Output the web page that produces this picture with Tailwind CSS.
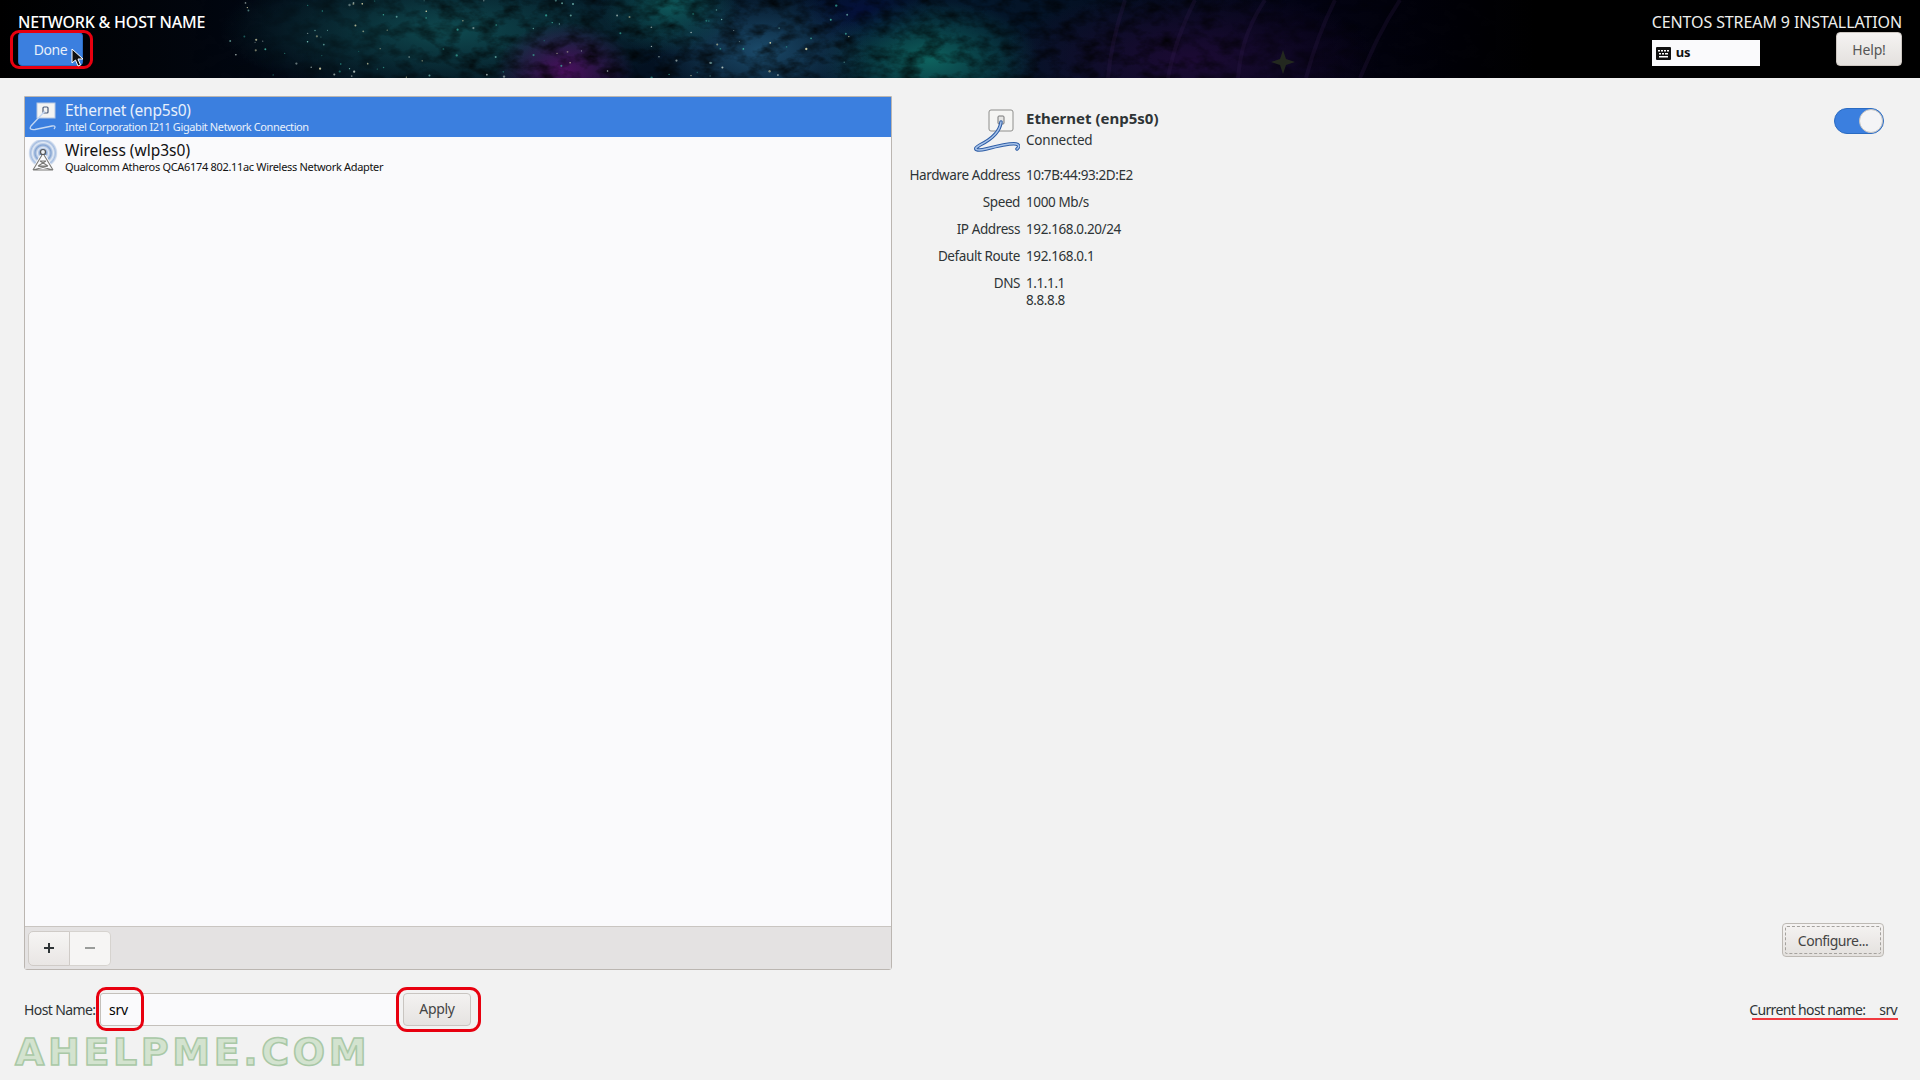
<!DOCTYPE html>
<html lang="en">
<head>
  <meta charset="UTF-8">
  <title>Network &amp; Host Name</title>
  <script src="https://cdn.jsdelivr.net/npm/@tailwindcss/browser@4"></script>
</head>
<body class="relative h-[1080px] w-[1920px] overflow-hidden bg-[#f2f2f2] font-['Noto_Sans',sans-serif] text-[14px] text-[#2e3436]">

  <!-- Banner -->
  <header class="relative flex h-[78px] justify-between overflow-hidden bg-[#020210] bg-[radial-gradient(ellipse_70px_50px_at_565px_72px,#4a0f5e_0%,transparent_100%),radial-gradient(ellipse_70px_50px_at_670px_5px,#0f5a5c_0%,transparent_100%),radial-gradient(ellipse_110px_60px_at_760px_50px,#1b4a6a_0%,transparent_100%),radial-gradient(ellipse_110px_60px_at_930px_60px,#0e625e_0%,transparent_100%),radial-gradient(ellipse_70px_40px_at_860px_10px,#04103a_0%,transparent_100%),radial-gradient(ellipse_190px_70px_at_1190px_60px,#1c0a34_0%,transparent_100%),radial-gradient(ellipse_230px_70px_at_450px_30px,#0f4a50_0%,transparent_100%),linear-gradient(90deg,#000_0%,#020814_15%,#04182c_50%,#030314_68%,#000_80%)]">
    <svg class="absolute inset-0" width="1920" height="78">
      <filter id="noise"><feTurbulence type="fractalNoise" baseFrequency="0.05 0.08" numOctaves="4" seed="7"/><feColorMatrix values="0 0 0 0 0  0 0 0 0 0  0 0 0 0 0  1.6 0 0 0 -0.65"/></filter>
      <linearGradient id="fade"><stop offset="0.1" stop-color="#000"/><stop offset="0.25" stop-color="#fff"/><stop offset="0.6" stop-color="#fff"/><stop offset="0.78" stop-color="#000"/></linearGradient>
      <mask id="fadeMask"><rect width="1920" height="78" fill="url(#fade)"/></mask>
      <rect width="1920" height="78" filter="url(#noise)" mask="url(#fadeMask)"/>
      <g id="stars"></g>
      <path d="M1125 0C1115 30 1110 55 1108 78M1195 0C1180 30 1172 55 1168 78M1265 0C1245 30 1240 55 1238 78M1335 0C1320 30 1312 55 1306 78M1400 0C1380 30 1370 55 1360 78" fill="none" stroke="#3a2458" stroke-width="4" opacity="0.2"/>
      <path d="M1283 50l3 9 9 3-9 3-3 9-3-9-9-3 9-3z" fill="#23281f"/>
    </svg>
    <div class="relative pl-[18px]">
      <h1 class="mt-[11px] text-[16px] leading-[22px] font-medium tracking-[-0.2px] text-white">NETWORK &amp; HOST NAME</h1>
      <button class="mt-[-1px] h-[34px] w-[65px] rounded-[4px] border border-[#2a6bc2] bg-[#3b7fdf] text-[14px] tracking-[-0.4px] text-[#e8effa]">Done</button>
    </div>
    <div class="relative flex flex-col items-end pr-[18px]">
      <p class="mt-[11px] text-[16px] leading-[22px] tracking-[-0.1px] text-[#eeeeec]">CENTOS STREAM 9 INSTALLATION</p>
      <div class="flex w-full justify-between">
        <div class="mt-[7px] flex h-[26px] w-[108px] items-center gap-[5px] bg-[#fafafc] pl-[4px] text-[13px] font-bold text-[#111]">
          <svg width="15" height="13" viewBox="0 0 15 13"><rect width="15" height="13" rx="1" fill="#111"/><path d="M2 3h2v1.500H2zM5 3h2v1.500H5zM8 3h2v1.500H8zM11 3h2v1.500h-2zM3 6h2v1.500H3zM6 6h2v1.500H6zM9 6h3v1.500H9zM3 9h9v1.500H3z" fill="#fff"/></svg>
          us
        </div>
        <button class="mt-[-1px] h-[34px] w-[66px] rounded-[4px] border border-[#cdc7c2] bg-gradient-to-b from-[#f5f3f2] to-[#e4e1de] text-[14px] tracking-[-0.2px] text-[#555]">Help!</button>
      </div>
    </div>
  </header>

  <main class="flex h-[1002px] flex-col px-[24px]">
    <div class="flex h-[892px] pt-[18px]">

      <!-- Device list -->
      <section class="flex h-[874px] w-[868px] flex-col rounded-b-[3px] border border-[#bbb6b1]">
        <ul class="h-[829px] bg-[#fafafc]">
          <li class="flex h-[40px] items-center bg-[#3b7fdf] text-[#e8f0fb]">
            <svg class="mx-[3px] shrink-0" width="34" height="34" viewBox="0 0 34 34">
              <rect x="9" y="3" width="18" height="15" fill="#f4f4f2" stroke="#b9c9e2"/>
              <rect x="15" y="7" width="5" height="6" rx="1" fill="none" stroke="#4a5a78" stroke-width="1.200"/>
              <path d="M17 11L3 26c-2 3 0 4 4 3.500L24 26c3-.5 4 .5 2 3" fill="none" stroke="#c5d8f2" stroke-width="1.300"/>
            </svg>
            <div>
              <p class="text-[15.5px] leading-[18px] tracking-[-0.2px]">Ethernet (enp5s0)</p>
              <p class="text-[11px] leading-[15px] tracking-[-0.4px]">Intel Corporation I211 Gigabit Network Connection</p>
            </div>
          </li>
          <li class="flex h-[40px] items-center text-[#111]">
            <svg class="mx-[3px] shrink-0" width="34" height="34" viewBox="0 0 34 34">
              <defs>
                <radialGradient id="waves" cx="0.5" cy="0.5" r="0.5">
                  <stop offset="0.2" stop-color="#6f93c8"/><stop offset="0.38" stop-color="#dfe7f3"/><stop offset="0.55" stop-color="#84a4d2"/><stop offset="0.72" stop-color="#e4ebf5"/><stop offset="0.85" stop-color="#a5bde0"/><stop offset="1" stop-color="#e9eef6"/>
                </radialGradient>
              </defs>
              <circle cx="15" cy="13" r="14.500" fill="url(#waves)"/>
              <path d="M12 15L4 30h22l-8-15z" fill="#fafafc"/>
              <circle cx="15" cy="12" r="2.500" fill="#eef1f5" stroke="#555" stroke-width="1.200"/>
              <path d="M14 15L5 30M16 15l9 15M12 21h6M10 26h10M5 30h20M12 21l8 5M18 21l-8 5M10 26l15 4M20 26L5 30" fill="none" stroke="#7b7b78" stroke-width="1.100"/>
            </svg>
            <div>
              <p class="text-[15.5px] leading-[18px]">Wireless (wlp3s0)</p>
              <p class="text-[11px] leading-[15px] tracking-[-0.32px]">Qualcomm Atheros QCA6174 802.11ac Wireless Network Adapter</p>
            </div>
          </li>
        </ul>
        <div class="flex h-[43px] items-center border-t border-[#c9c5c1] bg-[#e4e2e2] pl-[3px]">
          <button class="flex h-[35px] w-[42px] items-center justify-center rounded-l-[5px] border border-[#cfcbc7] bg-gradient-to-b from-[#f6f5f4] to-[#e9e6e4]">
            <svg width="12" height="12" viewBox="0 0 12 12"><path d="M6 1v10M1 6h10" stroke="#2e3436" stroke-width="2"/></svg>
          </button>
          <button class="flex h-[35px] w-[41px] items-center justify-center rounded-r-[5px] border border-l-0 border-[#d6d3cf] bg-[#f6f5f4]">
            <svg width="12" height="12" viewBox="0 0 12 12"><path d="M1 6h10" stroke="#9a9c9a" stroke-width="2"/></svg>
          </button>
        </div>
      </section>

      <!-- Device details -->
      <section class="relative flex-1">
        <div class="flex items-start pl-[80px] pt-[12px]">
          <svg class="mt-[1px] shrink-0" width="48" height="46" viewBox="0 0 48 46">
            <rect x="17" y="1" width="24" height="21" rx="2" fill="#f5f5f3" stroke="#8e8e8c"/>
            <rect x="26" y="7" width="6" height="8" rx="1" fill="#e6e6e4" stroke="#777"/>
            <path d="M29 13C28 22 20 30 8 36C-1 41 6 42 14 40C26 37 38 34 44 35C48 36 47 38 45 40" fill="none" stroke="#2f5ea6" stroke-width="3.500" stroke-linecap="round"/>
            <path d="M29 13C28 22 20 30 8 36C-1 41 6 42 14 40C26 37 38 34 44 35C48 36 47 38 45 40" fill="none" stroke="#a9c4ea" stroke-width="1.500" stroke-linecap="round"/>
          </svg>
          <div class="pl-[6px]">
            <p class="text-[15px] leading-[20px] font-bold">Ethernet (enp5s0)</p>
            <p class="mt-[2px] text-[13.5px] leading-[20px] tracking-[-0.2px]">Connected</p>
          </div>
        </div>
        <dl class="mt-[10px] grid w-[450px] grid-cols-[128px_1fr] gap-x-[6px] gap-y-[7px] text-[13.5px] leading-[20px] tracking-[-0.4px]">
          <dt class="text-right">Hardware Address</dt><dd>10:7B:44:93:2D:E2</dd>
          <dt class="text-right">Speed</dt><dd>1000 Mb/s</dd>
          <dt class="text-right">IP Address</dt><dd>192.168.0.20/24</dd>
          <dt class="text-right">Default Route</dt><dd>192.168.0.1</dd>
          <dt class="text-right">DNS</dt><dd class="pt-[2px] leading-[17px]">1.1.1.1<br>8.8.8.8</dd>
        </dl>
        <div class="absolute left-[942px] top-[12px] h-[26px] w-[50px] rounded-full border border-[#2a6bc2] bg-[#3b7fdf]">
          <div class="ml-auto h-[24px] w-[24px] rounded-full border border-[#c5c2be] bg-[#f4f4f6]"></div>
        </div>
        <button class="absolute left-[890px] top-[827px] h-[34px] w-[102px] rounded-[4px] border border-[#bdb9b4] bg-gradient-to-b from-[#f5f3f2] to-[#e4e1de] p-[2px] text-[14px] tracking-[-0.5px] text-[#444]">
          <span class="flex h-full items-center justify-center rounded-[2px] border border-dashed border-[#a5a29e]">Configure...</span>
        </button>
      </section>
    </div>

    <!-- Host name row -->
    <div class="flex items-center justify-between pt-[23px]">
      <div class="flex items-center">
        <label class="w-[76px] whitespace-nowrap pb-[1px] text-[14px] tracking-[-0.6px]">Host Name:</label>
        <div class="flex h-[33px] w-[298px] items-center rounded-l-[3px] border border-[#c4c0bb] bg-[#fafafc] pb-[1px] pl-[8px] text-[14px] tracking-[-0.3px] text-black">srv</div>
        <button class="ml-[5px] h-[33px] w-[68px] rounded-[4px] border border-[#c9c5c1] bg-gradient-to-b from-[#f3f2f1] to-[#e6e3e1] pb-[2px] text-[14px] tracking-[-0.3px] text-[#444]">Apply</button>
      </div>
      <p class="mr-[-1px] flex gap-[14px] text-[14px] tracking-[-0.65px]"><span>Current host name:</span><span>srv</span></p>
    </div>

    <p class="mt-[9px] ml-[-9px] whitespace-nowrap text-[38px] leading-[34px] font-bold tracking-[3.6px] text-[#d3e3cf] [-webkit-text-stroke:1.500px_#a9c8a6] font-['DejaVu_Sans',sans-serif]">AHELPME.COM</p>
  </main>

  <!-- Red annotations on top of the screenshot -->
  <div class="absolute left-[10px] top-[30px] h-[39px] w-[83px] rounded-[9px] border-[3px] border-[#e8000f]"></div>
  <div class="absolute left-[96px] top-[987px] h-[44px] w-[48px] rounded-[10px] border-[3px] border-[#e8000f]"></div>
  <div class="absolute left-[396px] top-[987px] h-[45px] w-[85px] rounded-[11px] border-[3px] border-[#e8000f]"></div>
  <div class="absolute left-[1752px] top-[1018px] h-[2px] w-[146px] bg-[#f03a40]"></div>

  <!-- Mouse pointer -->
  <svg class="absolute left-[71px] top-[48px]" width="13" height="19" viewBox="0 0 13 19">
    <path d="M1 1v14l3.500-3 2.500 6 2.500-1-2.500-6h5z" fill="#111" stroke="#fff"/>
  </svg>

  <script>
    // scatter stars over the nebula, fixed seed so every render is the same
    let seed = 42;
    const rnd = () => (seed = (seed * 16807) % 2147483647) / 2147483647;
    const stars = document.getElementById('stars');
    const colors = ['#3fae9c', '#7fc9c0', '#b8c8c4', '#d8d4a8', '#2c8f86'];
    for (let i = 0; i < 120; i++) {
      const dot = document.createElementNS('http://www.w3.org/2000/svg', 'circle');
      dot.setAttribute('cx', 230 + rnd() * 620);
      dot.setAttribute('cy', rnd() * 78);
      dot.setAttribute('r', 0.5 + rnd() * 0.7);
      dot.setAttribute('fill', colors[Math.floor(rnd() * colors.length)]);
      dot.setAttribute('opacity', 0.4 + rnd() * 0.6);
      stars.appendChild(dot);
    }
  </script>
</body>
</html>
